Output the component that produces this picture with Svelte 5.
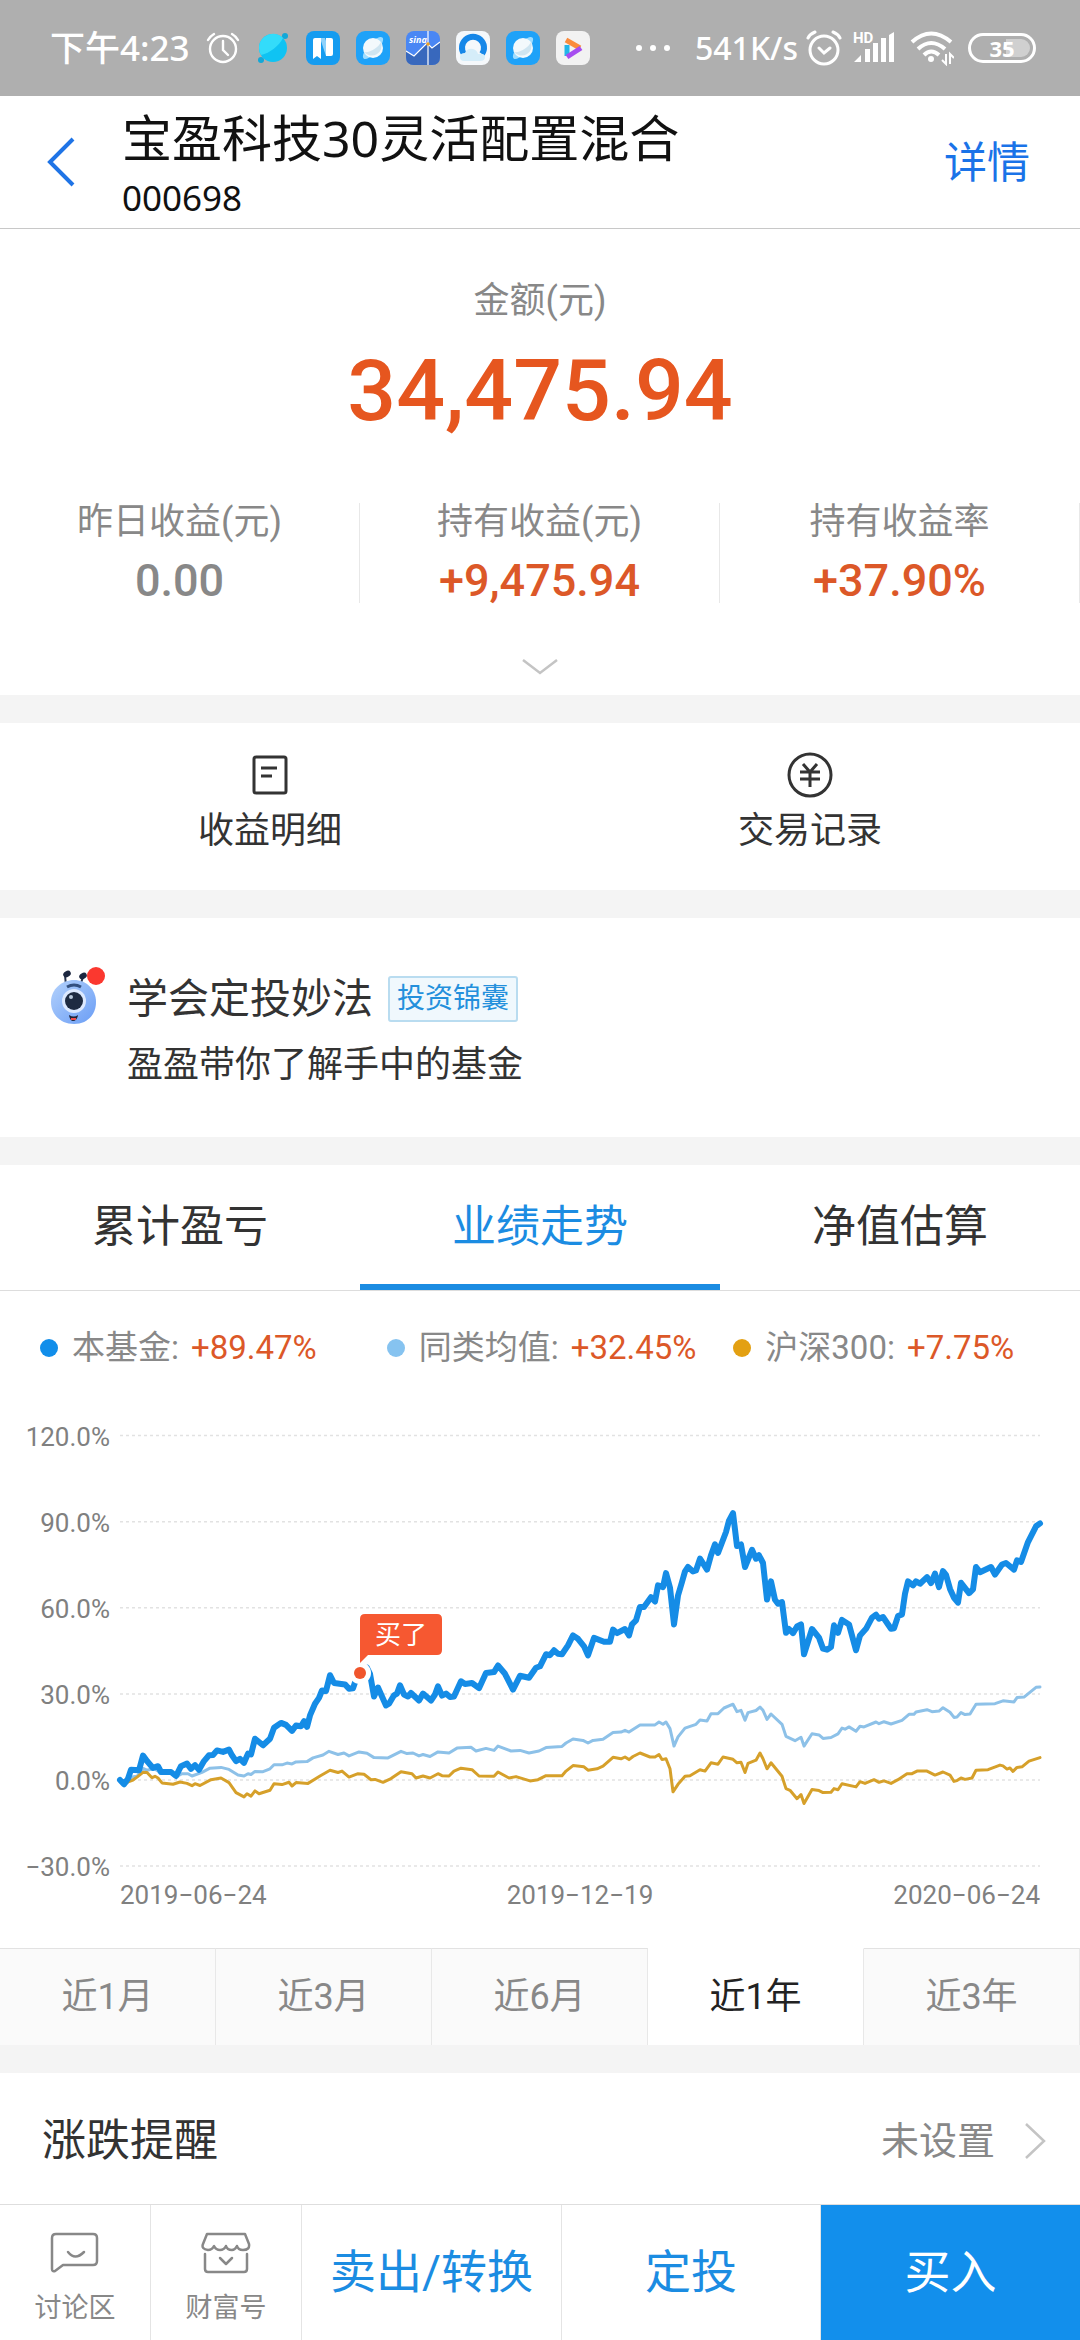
<script>
  const fund = { name: '宝盈科技30灵活配置混合', code: '000698', amount: '34,475.94' };

  const profits = [
    { label: '昨日收益(元)', value: '0.00', flat: true },
    { label: '持有收益(元)', value: '+9,475.94' },
    { label: '持有收益率', value: '+37.90%' },
  ];

  const tabs = ['累计盈亏', '业绩走势', '净值估算'];
  let activeTab = $state('业绩走势');

  const periods = ['近1月', '近3月', '近6月', '近1年', '近3年'];
  let activePeriod = $state('近1年');

  const legend = [
    { name: '本基金', value: '+89.47%', kind: 'own' },
    { name: '同类均值', value: '+32.45%', kind: 'peer' },
    { name: '沪深300', value: '+7.75%', kind: 'index' },
  ];

  const ticks = [120, 90, 60, 30, 0, -30];

  // x position, return in percent
  const own = [
    [120, 0], [124, -1.5], [128, 0.5], [131, 3.6], [139, 3.4], [143, 8.5], [147, 6.6], [153, 4.2], [158, 4.8],
    [161, 2.8], [171, 2.8], [176, 1.4], [181, 4.8], [187, 5.7], [191, 3.9], [195, 5.2], [199, 3.6], [204, 6.6],
    [209, 8.6], [213, 8.7], [217, 10.3], [223, 9.8], [229, 10.6], [232, 8.6], [236, 6.6], [240, 7.4], [244, 6],
    [248, 9.2], [251, 8.9], [255, 14.4], [263, 12.1], [270, 14.4], [274, 18.2], [281, 19.9], [286, 19.2],
    [292, 17.1], [296, 19], [301, 18.7], [304, 20.5], [307, 18.5], [310, 22.5], [315, 26.6], [319, 28.6],
    [322, 31.2], [326, 31], [330, 36.5], [334, 33.8], [345, 33.3], [349, 31.8], [353, 32], [356, 35], [360, 37],
    [367, 39.1], [370, 37], [374, 29.1], [378, 32.2], [386, 26], [389, 26.6], [394, 29.5], [397, 30.1], [400, 33],
    [404, 29.8], [408, 29.1], [411, 30.3], [419, 27.7], [423, 30.1], [431, 27.7], [435, 29.8], [438, 32.6],
    [442, 29.4], [446, 30.1], [450, 28.9], [454, 29.1], [461, 34.4], [465, 33.5], [472, 33.8], [479, 32],
    [486, 37.3], [494, 37.6], [498, 39.9], [505, 37], [513, 31.5], [520, 36.3], [529, 35.6], [536, 39.1],
    [540, 39.6], [546, 43.8], [550, 43.5], [554, 45.2], [558, 44], [562, 43.8], [568, 46.9], [573, 50.4],
    [578, 49.2], [584, 46.6], [588, 43.4], [594, 49.5], [604, 48.2], [610, 48.2], [613, 52.4], [617, 51.2],
    [625, 52.6], [629, 50.4], [632, 54.2], [636, 55.6], [640, 60.3], [644, 60.3], [651, 63.7], [655, 62.2],
    [658, 67.8], [663, 67.2], [666, 72.1], [670, 67], [674, 54.2], [678, 64.3], [682, 69], [685, 72.7],
    [688, 74.2], [693, 72.7], [696, 73], [700, 77.1], [707, 73.3], [711, 78.3], [715, 82.1], [718, 79.1],
    [726, 86.4], [729, 90.4], [733, 93], [737, 81.5], [741, 82.1], [745, 74.2], [752, 80.2], [756, 77.1],
    [759, 78.3], [763, 75.6], [767, 62.9], [771, 69.2], [775, 62.8], [778, 61.4], [782, 62], [786, 51.3],
    [789, 52.6], [793, 51.2], [797, 53.5], [801, 54.2], [804, 43.8], [812, 52.6], [819, 49.6], [823, 45.8],
    [827, 45.4], [831, 46.3], [834, 53.9], [838, 51.3], [842, 55.8], [849, 54.2], [856, 45.2], [860, 50.4],
    [866, 52.7], [872, 56.6], [876, 57.6], [879, 56.2], [883, 56.8], [891, 52.7], [894, 52.9], [898, 57.1],
    [902, 57.7], [905, 64.9], [908, 69.2], [913, 67.8], [916, 69.2], [920, 68.4], [927, 70.7], [931, 68.6],
    [935, 71.9], [939, 67.2], [943, 72.8], [946, 71.5], [950, 66.6], [954, 63.5], [958, 61.8], [961, 68.7],
    [969, 65.1], [973, 66.4], [976, 74.2], [980, 72.4], [991, 74.2], [995, 71.6], [1002, 75.1], [1006, 75.6],
    [1014, 73.3], [1017, 76.5], [1021, 76], [1028, 82.9], [1036, 88.4], [1040, 89.4],
  ];

  const peer = [
    [120, 0], [127, -1], [132, 1], [137, 1.3], [143, 4], [147, 3.4], [154, 4], [161, 2.4], [171, 2.4], [177, 1.3],
    [182, 2.2], [188, 2.2], [192, 1.4], [202, 2.7], [210, 4.1], [221, 4.4], [229, 3.7], [238, 1.7], [244, 1.4],
    [248, 2.2], [251, 1.9], [255, 3], [263, 2.9], [270, 3.9], [274, 5.3], [282, 5.3], [287, 5.9], [292, 5.6],
    [296, 6.3], [307, 6.4], [313, 7.7], [323, 8.7], [329, 10], [338, 8.9], [344, 9.4], [349, 8.4], [359, 9.8],
    [367, 9.3], [374, 7.8], [388, 7.7], [401, 10], [407, 9.2], [413, 9.4], [419, 8.4], [423, 8.9], [430, 8.2],
    [438, 9.8], [449, 9.4], [457, 11.1], [471, 11.4], [476, 10.1], [486, 11], [494, 10.3], [498, 11.8],
    [511, 10.1], [520, 10.3], [529, 9.4], [539, 10.1], [546, 11.3], [562, 11.7], [566, 12.9], [573, 14.3],
    [583, 13.8], [588, 12.9], [593, 13.8], [603, 14.2], [613, 16.5], [621, 16.7], [625, 17.3], [629, 16.7],
    [640, 19.2], [655, 19.2], [659, 20.2], [663, 19.4], [666, 20.2], [670, 17.9], [674, 11.8], [678, 15],
    [685, 18.1], [696, 19.4], [700, 20.9], [707, 20.6], [711, 23.1], [718, 23.1], [724, 25.1], [733, 26.4],
    [737, 23.8], [741, 24.3], [745, 20.8], [748, 23.5], [756, 24.2], [760, 25.4], [763, 24.3], [767, 21.1],
    [771, 23], [782, 19.4], [786, 15.2], [795, 13.7], [801, 14.9], [804, 11.8], [812, 16.1], [819, 15.7],
    [823, 14.5], [831, 14.8], [838, 16.1], [842, 18.1], [845, 17.7], [849, 18.5], [856, 17], [860, 18.7],
    [864, 18.5], [876, 20.2], [879, 19.6], [884, 20.3], [891, 19.5], [902, 20.8], [909, 22.9], [914, 22.9],
    [916, 23.7], [927, 24.5], [932, 23.8], [939, 24], [943, 25.2], [950, 23.6], [954, 21.8], [957, 22],
    [961, 23.5], [965, 22.8], [970, 23], [976, 26.4], [995, 26.6], [1003, 27.6], [1014, 27.2], [1017, 28.7],
    [1024, 28.9], [1036, 32.3], [1040, 32.4],
  ];

  const index = [
    [120, 0], [124, -1.2], [133, 0], [137, 1], [143, 2.7], [147, 2.6], [152, 0.8], [155, 1.3], [158, 0.7],
    [162, -1], [173, -1.5], [180, -0.7], [187, -1.2], [192, -2], [195, -1.3], [200, -1.9], [211, 0.1], [221, 0.7],
    [229, -0.9], [236, -4.4], [244, -5.9], [247, -4.8], [251, -5.6], [255, -3.8], [259, -4.8], [270, -3.6],
    [274, -1.3], [282, -1.6], [289, -0.8], [292, -2.1], [296, -0.9], [308, -1.2], [320, 1.4], [330, 3.4],
    [338, 2.6], [342, 3.1], [349, 1], [358, 2.2], [364, 2], [371, 0.1], [375, 0.2], [383, -0.8], [391, 0.5],
    [401, 2.9], [412, 2.2], [416, 0.7], [423, 1.4], [430, 0.7], [438, 2.2], [442, 1.5], [449, 1.4], [454, 3.1],
    [461, 4.1], [472, 3.6], [479, 1.4], [494, 1.3], [498, 2.8], [509, 0.7], [516, 1.2], [530, -0.3], [538, 0.1],
    [546, 1.5], [562, 1.5], [566, 3.1], [573, 5], [584, 4.6], [588, 3.4], [597, 3.9], [603, 4.8], [613, 7.9],
    [621, 7.4], [625, 8], [629, 7.1], [633, 8.2], [640, 9.4], [650, 8], [655, 8], [659, 8.9], [662, 7.1],
    [666, 7.4], [670, 3.9], [673, -4.1], [678, -1.5], [685, 1.3], [690, 1.5], [700, 3.6], [705, 3.1], [711, 6],
    [718, 5.5], [723, 8], [733, 7.2], [737, 6], [741, 6.2], [745, 2.6], [748, 5.8], [756, 6.9], [760, 9.4],
    [763, 7.4], [767, 3.9], [771, 6], [782, 1.3], [786, -3], [790, -3.6], [797, -6.5], [801, -5.1], [804, -8.2],
    [812, -3.3], [819, -3.7], [823, -4.4], [831, -4.3], [834, -3], [838, -3.4], [842, -1.3], [856, -2.4],
    [860, -0.6], [865, -1.2], [874, 0.1], [879, -0.8], [884, -0.3], [891, -1.2], [898, 0.1], [907, 2.2],
    [912, 2.2], [917, 3.1], [927, 3.1], [935, 1.7], [943, 2.8], [950, 1.7], [954, -0.5], [957, -0.2], [961, 0.7],
    [965, 0.2], [972, 0.7], [976, 3.4], [988, 3.6], [1000, 5.2], [1003, 4.9], [1007, 3.8], [1010, 4.2], [1013, 3],
    [1017, 4.4], [1022, 4.6], [1029, 6.6], [1040, 7.8],
  ];

  const y = (v) => 380 - v * 2.87;
  const line = (points) => points.map(([x, v]) => `${x},${y(v).toFixed(1)}`).join(' ');
  const tickLabel = (v) => `${v < 0 ? '−' : ''}${Math.abs(v).toFixed(1)}%`;
</script>

{#snippet planet()}
  <svg class="app-icon" viewBox="0 0 34 34">
    <rect width="34" height="34" rx="9" fill="#1fa2f8" />
    <ellipse cx="17" cy="17" rx="14" ry="5" transform="rotate(-48 17 17)" fill="#9edcff" />
    <circle cx="17" cy="17" r="10" fill="#f3f9fc" />
    <path d="M8 21c6 1 14-4 17-10a10 10 0 0 1-17 10z" fill="#cfe5f1" />
  </svg>
{/snippet}

<div class="page">
  <div class="status">
    <span class="time">下午4:23</span>
    <svg class="clock" viewBox="0 0 34 34" fill="none" stroke="#fff" stroke-width="2.4" stroke-linecap="round">
      <circle cx="17" cy="18" r="13" />
      <path d="M17 10v9l5 5M2 9a16 16 0 0 1 6-6M26 3a16 16 0 0 1 6 6" />
    </svg>
    <div class="apps">
      <svg class="app-icon" viewBox="0 0 34 34">
        <circle cx="5" cy="29" r="3" fill="#12a8d8" /><circle cx="29" cy="5" r="3" fill="#12a8d8" />
        <circle cx="17" cy="17" r="14" fill="#0fc3f3" />
        <path d="M5 24A14 14 0 0 1 27 7c-4 8-13 15-22 17z" fill="#33dcfa" />
      </svg>
      <svg class="app-icon" viewBox="0 0 34 34">
        <rect width="34" height="34" rx="8" fill="#159cf0" />
        <path d="M14 7h5l6 18h-5z" fill="#8fd2fb" />
        <path d="M7 9q0-2 2-2h6v21l-4-3-4 3zM20 7h5q2 0 2 2v14q0 2-2 2h-5z" fill="#fff" />
      </svg>
      {@render planet()}
      <svg class="app-icon" viewBox="0 0 34 34">
        <rect width="34" height="34" rx="8" fill="#4a87f4" />
        <path d="M0 20l8 5 13-13 5 5 8-6v15q0 8-8 8H8q-8 0-8-8z" fill="#3868bd" />
        <path d="M0 20l8 5 13-13 5 5 8-6M22 0v34" fill="none" stroke="#fff" stroke-width="1.2" />
        <text x="3" y="12" class="sina">sina</text>
        <circle cx="22" cy="13" r="1.8" fill="#f0a020" />
      </svg>
      <svg class="app-icon" viewBox="0 0 34 34">
        <rect width="34" height="34" rx="8" fill="#f5f8fb" />
        <path d="M8 23a11 11 0 1 1 18 0" fill="none" stroke="#1687e8" stroke-width="6" />
        <path d="M8 30q-4 0-4-4t5-4q2-5 8-4 4 1 5 5 7-1 7 3 0 4-5 4z" fill="#d5edf9" />
      </svg>
      {@render planet()}
      <svg class="app-icon" viewBox="0 0 34 34">
        <rect width="34" height="34" rx="8" fill="#f2f2f2" />
        <path d="M11 14v11" stroke="#22b5e8" stroke-width="5" />
        <path d="M10 9l14 8" stroke="#fb8b3c" stroke-width="5" />
        <path d="M11 26l14-9" stroke="#a64df0" stroke-width="5" />
      </svg>
    </div>
    <svg class="more" viewBox="0 0 36 8" fill="#fff">
      <circle cx="4" cy="4" r="3" /><circle cx="18" cy="4" r="3" /><circle cx="32" cy="4" r="3" />
    </svg>
    <span class="speed">541K/s</span>
    <svg class="alarm" viewBox="0 0 36 36" fill="none" stroke="#fff" stroke-width="3" stroke-linecap="round">
      <circle cx="18" cy="20" r="14" />
      <path d="M13 18l5 5 6-5M2 8q2-4 7-6M27 2q5 2 7 6" />
    </svg>
    <svg class="signal" viewBox="0 0 44 40" fill="#fff">
      <text x="1" y="15" class="hd">HD</text>
      <path d="M2 34l7-7v7zM13 21h5v13h-5zM21 15h5v19h-5zM29 10h5v24h-5zM37 7l5-3v30h-5z" />
    </svg>
    <svg class="wifi" viewBox="0 0 44 36" fill="none" stroke="#fff" stroke-width="4">
      <path d="M2 12q19-17 39 0M8 19q13-12 27 0M14 25q7-7 15 0" />
      <circle cx="21" cy="29" r="3" fill="#fff" stroke="none" />
      <path d="M36 24v10l-4-4M40 34V24l4 4" stroke-width="2" />
    </svg>
    <div class="battery"><i></i><span>35</span></div>
  </div>

  <header>
    <button class="back" aria-label="返回">
      <svg viewBox="0 0 30 50" fill="none" stroke="#1f74e6" stroke-width="4"><path d="M27 2L4 25l23 23" /></svg>
    </button>
    <div class="fund">
      <h1>{fund.name}</h1>
      <p>{fund.code}</p>
    </div>
    <a class="detail" href="#detail">详情</a>
  </header>

  <section class="summary">
    <p class="label">金额(元)</p>
    <p class="amount">{fund.amount}</p>
    <div class="profits">
      {#each profits as item}
        <div class="profit">
          <p class="label">{item.label}</p>
          <p class="value" class:flat={item.flat}>{item.value}</p>
        </div>
      {/each}
    </div>
    <button class="expand" aria-label="展开">
      <svg viewBox="0 0 36 16" fill="none" stroke="#c4c4c4" stroke-width="2.5"><path d="M1 1l17 13L35 1" /></svg>
    </button>
  </section>

  <nav class="links">
    <a href="#profit">
      <svg viewBox="0 0 46 46" fill="none" stroke="#333" stroke-width="3">
        <rect x="7" y="5" width="32" height="36" rx="2" />
        <path d="M14 16h16M14 24h11" />
      </svg>
      收益明细
    </a>
    <a href="#records">
      <svg viewBox="0 0 46 46" fill="none" stroke="#333" stroke-width="3">
        <circle cx="23" cy="23" r="21" />
        <path d="M16 12l7 8 7-8M23 19v16M13 20h20M13 27h20" />
      </svg>
      交易记录
    </a>
  </nav>

  <section class="tip">
    <svg class="robot" viewBox="0 0 56 60">
      <defs>
        <linearGradient id="skin" x1="0" y1="0" x2="1" y2="1">
          <stop offset="0" stop-color="#b4d2fc" /><stop offset="1" stop-color="#6a9df5" />
        </linearGradient>
      </defs>
      <path d="M16 19L15 8M30 19l3-9" stroke="#26324d" stroke-width="2" />
      <ellipse cx="17" cy="7" rx="4" ry="3" fill="#1c2740" transform="rotate(-30 17 7)" />
      <ellipse cx="33" cy="9" rx="4" ry="3" fill="#1c2740" transform="rotate(-30 33 9)" />
      <path d="M1 35C1 22 12 13 24 13s22 9 22 22-9 22-22 22S1 48 1 35z" fill="url(#skin)" />
      <path d="M17 20q7-4 14 0" fill="none" stroke="#33507f" stroke-width="3" />
      <circle cx="24" cy="34" r="12" fill="#dce9ff" />
      <circle cx="24" cy="34" r="9" fill="#1e2b42" />
      <circle cx="21" cy="30" r="2" fill="#b9c9dc" />
      <path d="M19 48q5 3 9 0-1 6-5 6-3 0-4-6z" fill="#20243a" /><path d="M21 51h5v2h-5z" fill="#ee4c4c" />
      <circle cx="46" cy="9" r="9" fill="#fb382f" />
    </svg>
    <div>
      <h2>学会定投妙法 <span class="tag">投资锦囊</span></h2>
      <p>盈盈带你了解手中的基金</p>
    </div>
  </section>

  <section class="performance">
    <div class="tabs" role="tablist">
      {#each tabs as tab}
        <button role="tab" aria-selected={tab === activeTab} class:active={tab === activeTab} onclick={() => (activeTab = tab)}>
          {tab}
        </button>
      {/each}
    </div>

    <ul class="legend">
      {#each legend as item}
        <li class={item.kind}>{item.name}: <b>{item.value}</b></li>
      {/each}
    </ul>

    <svg class="chart" viewBox="0 0 1080 548" fill="none" role="img" aria-label="业绩走势">
      {#each ticks as tick}
        <line class="grid" x1="120" x2="1040" y1={y(tick)} y2={y(tick)} />
        <text class="axis end" x="110" y={y(tick) + 10}>{tickLabel(tick)}</text>
      {/each}
      <polyline class="line peer" points={line(peer)} />
      <polyline class="line index" points={line(index)} />
      <polyline class="line own" points={line(own)} />

      <circle cx="360" cy="273" r="11" fill="#fff" />
      <circle cx="360" cy="273" r="6" fill="#f0552c" />
      <path d="M360 263v-44q0-5 5-5h72q5 0 5 5v31q0 5-5 5h-69z" fill="#f65831" />
      <text class="bought" x="401" y="244">买了</text>

      <text class="axis" x="120" y="504">2019−06−24</text>
      <text class="axis middle" x="580" y="504">2019−12−19</text>
      <text class="axis end" x="1040" y="504">2020−06−24</text>
    </svg>

    <div class="periods">
      {#each periods as period}
        <button class:active={period === activePeriod} onclick={() => (activePeriod = period)}>{period}</button>
      {/each}
    </div>
  </section>

  <a class="remind" href="#remind">
    <span>涨跌提醒</span>
    <span class="state">未设置</span>
    <svg viewBox="0 0 22 36" fill="none" stroke="#c4c4c4" stroke-width="2.5"><path d="M2 1l18 17L2 35" /></svg>
  </a>

  <footer>
    <button class="small">
      <svg viewBox="0 0 50 42" fill="none" stroke="#888" stroke-width="2.5" stroke-linejoin="round" stroke-linecap="round">
        <path d="M6 2h37q4 0 4 4v23q0 4-4 4H13l-8 6q-3 1-3-2V6q0-4 4-4z" />
        <path d="M18 20q7 9 16 0" />
      </svg>
      讨论区
    </button>
    <button class="small">
      <svg viewBox="0 0 50 42" fill="none" stroke="#888" stroke-width="2.5" stroke-linejoin="round" stroke-linecap="round">
        <path d="M6 2h38l4 10q1 6-6 6-5 0-6-4-2 4-5 4-5 0-6-4-2 4-6 4-4 0-6-4-2 4-6 4-7-1-5-6z" />
        <path d="M4 22v15q0 3 3 3h36q3 0 3-3V22M19 26l6 6 6-6" />
      </svg>
      财富号
    </button>
    <button>卖出/转换</button>
    <button>定投</button>
    <button class="buy">买入</button>
  </footer>
</div>

<style>
  :global(body) {
    margin: 0;
    background: #f4f4f4;
  }
  .page {
    font-family: Roboto, "Noto Sans CJK SC", sans-serif;
    color: #333;
    font-size: 36px;
    line-height: 48px;
  }
  h1, h2, p, ul {
    margin: 0;
    padding: 0;
    font-weight: 400;
  }
  button {
    border: 0;
    padding: 0;
    background: none;
    font: inherit;
    color: inherit;
  }
  a {
    color: inherit;
    text-decoration: none;
  }
  svg {
    display: block;
    flex: none;
  }

  .status {
    display: flex;
    align-items: center;
    height: 96px;
    box-sizing: border-box;
    padding: 0 44px 0 50px;
    background: #afafaf;
    color: #fff;
    font-family: "Noto Sans", "Noto Sans CJK SC", sans-serif;
    font-weight: 500;
  }
  .time {
    font-size: 35px;
    margin-right: 16px;
  }
  .clock {
    width: 34px;
    margin-right: 16px;
  }
  .apps {
    display: flex;
    gap: 16px;
  }
  .app-icon {
    width: 34px;
    height: 34px;
  }
  .sina {
    font: italic 700 9px "Noto Sans", sans-serif;
    fill: #fff;
  }
  .more {
    width: 36px;
    margin: 0 24px 0 auto;
  }
  .speed {
    font-size: 32px;
    margin-right: 8px;
  }
  .alarm {
    width: 36px;
    margin-right: 10px;
  }
  .signal {
    width: 44px;
    margin-right: 14px;
  }
  .hd {
    font: 700 15px Roboto, sans-serif;
  }
  .wifi {
    width: 44px;
    margin-right: 14px;
  }
  .battery {
    position: relative;
    width: 62px;
    height: 24px;
    border: 3px solid #fff;
    border-radius: 15px;
    font-size: 22px;
    line-height: 24px;
    font-weight: 700;
    text-align: center;
  }
  .battery i {
    position: absolute;
    top: 3px;
    right: 3px;
    bottom: 3px;
    width: 24px;
    border-radius: 0 10px 10px 0;
    background: #d0d0d0;
  }
  .battery span {
    position: relative;
  }

  header {
    display: flex;
    align-items: center;
    height: 132px;
    padding: 0 50px 0 46px;
    border-bottom: 1px solid #c8c8c8;
    background: #fff;
    color: #111;
    font-family: "Noto Sans", "Noto Sans CJK SC", sans-serif;
  }
  .back {
    width: 76px;
  }
  .back svg {
    width: 30px;
  }
  .fund {
    flex: 1;
  }
  h1 {
    font-size: 50px;
    line-height: 72px;
  }
  .fund p {
    font-size: 35px;
    line-height: 48px;
  }
  .detail {
    font-size: 43px;
    color: #1a73e8;
  }

  .summary {
    padding: 48px 0 20px;
    background: #fff;
    text-align: center;
  }
  .label {
    color: #888;
  }
  .amount {
    margin: 16px 0 62px;
    font-size: 86px;
    line-height: 100px;
    font-weight: 500;
    color: #e6561f;
  }
  .profits {
    display: grid;
    grid-template-columns: repeat(3, 1fr);
  }
  .profit {
    height: 100px;
    border-right: 1px solid #e8e8e8;
  }
  .profit .label {
    line-height: 38px;
  }
  .value {
    margin-top: 10px;
    font-size: 45px;
    line-height: 60px;
    font-weight: 500;
    color: #dc5828;
  }
  .value.flat {
    color: #888;
  }
  .expand {
    margin: 56px auto 0;
    display: block;
  }
  .expand svg {
    width: 36px;
  }

  .links {
    display: grid;
    grid-template-columns: 1fr 1fr;
    margin: 28px 0;
    padding: 29px 0 35px;
    background: #fff;
  }
  .links a {
    display: flex;
    flex-direction: column;
    align-items: center;
    gap: 9px;
  }
  .links svg {
    width: 46px;
  }

  .tip {
    display: flex;
    gap: 21px;
    padding: 49px 50px 48px;
    background: #fff;
  }
  .robot {
    width: 56px;
    height: 60px;
  }
  h2 {
    display: flex;
    align-items: center;
    gap: 15px;
    margin-bottom: 10px;
    font-size: 41px;
    line-height: 64px;
  }
  .tag {
    padding: 0 7px;
    border: 2px solid #b9dcf0;
    border-radius: 3px;
    background: #f0f8fd;
    color: #2490dc;
    font-size: 28px;
    line-height: 42px;
  }

  .performance {
    margin: 28px 0;
    background: #fff;
  }
  .tabs {
    display: grid;
    grid-template-columns: repeat(3, 1fr);
    border-bottom: 1px solid #ddd;
  }
  .tabs button {
    height: 125px;
    padding-top: 4px;
    border-bottom: 6px solid transparent;
    font-size: 44px;
  }
  .tabs .active {
    border-bottom-color: #1b8ce2;
    color: #1b8ce2;
  }
  .legend {
    display: grid;
    grid-template-columns: repeat(3, 1fr);
    padding: 33px 0 28px 40px;
    list-style: none;
    font-size: 33px;
    color: #888;
    white-space: nowrap;
  }
  .legend li {
    display: flex;
    align-items: center;
    gap: 12px;
  }
  .legend li::before {
    content: "";
    width: 18px;
    height: 18px;
    margin-right: 2px;
    border-radius: 50%;
    background: #118eea;
  }
  .legend .peer::before {
    background: #86c3f0;
  }
  .legend .index::before {
    background: #e3a012;
  }
  .legend b {
    font-weight: 400;
    color: #dc5828;
  }

  .chart {
    width: 100%;
  }
  .grid {
    stroke: #e2e2e2;
    stroke-width: 1.5;
    stroke-dasharray: 3 3;
  }
  .axis {
    font-size: 26px;
    fill: #808080;
  }
  .middle {
    text-anchor: middle;
  }
  .end {
    text-anchor: end;
  }
  .line {
    stroke-linejoin: round;
    stroke-linecap: round;
  }
  .line.own {
    stroke: #158ce6;
    stroke-width: 6;
  }
  .line.peer {
    stroke: #8dc1e8;
    stroke-width: 3;
  }
  .line.index {
    stroke: #d6a02a;
    stroke-width: 3;
  }
  .bought {
    font-size: 26px;
    fill: #fff;
    text-anchor: middle;
  }

  .periods {
    display: grid;
    grid-template-columns: repeat(5, 1fr);
  }
  .periods button {
    height: 97px;
    border-top: 1px solid #e2e2e2;
    border-right: 1px solid #e8e8e8;
    background: #fafafa;
    color: #888;
  }
  .periods .active {
    border-top-color: transparent;
    background: #fff;
    color: #222;
  }

  .remind {
    display: flex;
    align-items: center;
    height: 127px;
    padding: 4px 34px 0 42px;
    background: #fff;
    font-size: 44px;
  }
  .state {
    margin-left: auto;
    margin-right: 29px;
    font-size: 38px;
    color: #888;
  }
  .remind svg {
    width: 22px;
  }

  footer {
    display: grid;
    grid-template-columns: 151fr 151fr 260fr 259fr 259fr;
    height: 136px;
    border-top: 1px solid #dedede;
    background: #fff;
  }
  footer button {
    padding-bottom: 2px;
    border-right: 1px solid #e4e4e4;
    font-size: 46px;
    color: #1b8ce2;
  }
  footer .small {
    display: flex;
    flex-direction: column;
    align-items: center;
    justify-content: center;
    gap: 16px;
    padding: 12px 0 0;
    font-size: 27px;
    line-height: 36px;
    color: #888;
  }
  footer .small svg {
    width: 50px;
  }
  footer .buy {
    border: 0;
    background: #128fec;
    color: #fff;
  }
</style>
